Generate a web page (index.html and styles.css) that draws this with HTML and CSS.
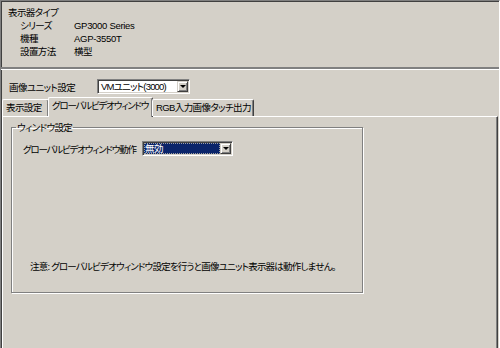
FILE: index.html
```html
<!DOCTYPE html>
<html lang="ja">
<head>
    <meta charset="UTF-8">
    <title>表示器タイプ</title>
    <link rel="stylesheet" href="styles.css">
</head>
<body>
    <div class="window">
        <div class="info">
            <div class="info-title">表示器タイプ</div>
            <div class="spec"><span class="spec-label">シリーズ</span><span class="latin">GP3000 Series</span></div>
            <div class="spec"><span class="spec-label">機種</span><span class="latin">AGP-3550T</span></div>
            <div class="spec"><span class="spec-label">設置方法</span><span>横型</span></div>
        </div>

        <div class="separator"></div>

        <div class="unit-row">
            <span class="unit-label">画像ユニット設定</span>
            <div class="combo unit-combo">
                <span class="combo-value">VMユニット(3000)</span>
                <span class="combo-button"><span class="arrow"></span></span>
            </div>
        </div>

        <div class="tabs">
            <div class="tab">表示設定</div>
            <div class="tab selected">グローバルビデオウィンドウ</div>
            <div class="tab">RGB入力画像タッチ出力</div>
        </div>

        <div class="panel">
            <fieldset class="group">
                <legend>ウィンドウ設定</legend>
                <div class="field-row">
                    <span class="field-label">グローバルビデオウィンドウ動作</span>
                    <div class="combo action-combo">
                        <span class="combo-value focused"><span class="focus-ring">無効</span></span>
                        <span class="combo-button"><span class="arrow"></span></span>
                    </div>
                </div>
                <p class="note">注意: グローバルビデオウィンドウ設定を行うと画像ユニット表示器は動作しません。</p>
            </fieldset>
        </div>
    </div>
</body>
</html>
```

FILE: styles.css
```css
body {
    margin: 0;
    background: #d4d0c8;
    font-family: "Liberation Sans", "Noto Sans CJK JP", sans-serif;
    font-size: 9.5px;
    letter-spacing: -0.6px;
    font-feature-settings: "palt";
    color: #000;
}
.latin {
    letter-spacing: -0.3px;
}
.window {
    width: 500px;
    height: 348px;
    box-sizing: border-box;
    overflow: hidden;
    border-top: 1px solid #808080;
    border-left: 1px solid #808080;
    border-right: 1px solid #ffffff;
    box-shadow: inset 1px 1px 0 #404040;
}
.info {
    padding: 5px 0 0 7px;
    line-height: 13px;
}
.spec {
    display: flex;
    padding-left: 12px;
}
.spec-label {
    width: 54px;
}
.separator {
    margin-top: 9px;
    height: 2px;
    background: #808080;
    border-bottom: 1px solid #ffffff;
}
.unit-row {
    display: flex;
    align-items: center;
    margin-top: 9px;
    padding-left: 8px;
}
.unit-label {
    width: 88px;
    white-space: nowrap;
}
.combo {
    display: flex;
    height: 15px;
    box-sizing: border-box;
    background: #ffffff;
    border-top: 1px solid #808080;
    border-left: 1px solid #808080;
    border-right: 1px solid #ffffff;
    border-bottom: 1px solid #ffffff;
    box-shadow: inset 1px 1px 0 #404040, inset -1px -1px 0 #d4d0c8;
    padding: 1px;
}
.unit-combo {
    width: 93px;
    letter-spacing: -0.8px;
}
.action-combo {
    width: 91px;
}
.combo-value {
    flex: 1;
    line-height: 11px;
    padding-left: 2px;
    white-space: nowrap;
    overflow: hidden;
}
.combo-value.focused {
    background: #0a246a;
    color: #ffffff;
    padding: 0;
}
.focus-ring {
    display: block;
    height: 11px;
    box-sizing: border-box;
    outline: 1px dotted #a0a0a0;
    outline-offset: -1px;
    padding-left: 1px;
}
.combo-button {
    width: 11px;
    box-sizing: border-box;
    background: #d4d0c8;
    border-top: 1px solid #d4d0c8;
    border-left: 1px solid #d4d0c8;
    border-right: 1px solid #404040;
    border-bottom: 1px solid #404040;
    box-shadow: inset 1px 1px 0 #ffffff, inset -1px -1px 0 #808080;
    display: flex;
    align-items: center;
    justify-content: center;
}
.arrow {
    width: 0;
    height: 0;
    border-left: 3px solid transparent;
    border-right: 3px solid transparent;
    border-top: 3px solid #000;
}
.tabs {
    display: flex;
    align-items: flex-end;
    height: 19px;
    margin-top: 3px;
    padding-left: 1px;
    position: relative;
    z-index: 1;
}
.tab {
    height: 17px;
    box-sizing: border-box;
    padding: 0 3px;
    line-height: 15px;
    border-top: 1px solid #ffffff;
    border-left: 1px solid #ffffff;
    border-right: 1px solid #404040;
    box-shadow: inset -1px 0 0 #808080;
    border-radius: 2px 2px 0 0;
    white-space: nowrap;
    overflow: hidden;
}
.tab:first-child {
    width: 47px;
}
.tab.selected {
    height: 20px;
    margin: 0 -1px -1px -1px;
    width: 105px;
    padding-left: 3px;
    background: #d4d0c8;
    line-height: 16px;
    letter-spacing: -1.2px;
}
.tab:last-child {
    width: 102px;
}
.panel {
    height: 240px;
    margin-left: 1px;
    margin-right: 1px;
    border-top: 1px solid #ffffff;
    border-left: 1px solid #ffffff;
    border-right: 1px solid #404040;
    box-shadow: inset -1px 0 0 #808080;
    padding-top: 4px;
}
.group {
    margin: 0 0 0 8px;
    padding: 0;
    width: 352px;
    height: 172px;
    box-sizing: border-box;
    border: 1px solid #808080;
    box-shadow: 1px 1px 0 #ffffff, inset 1px 1px 0 #ffffff;
}
.group legend {
    margin-left: 4px;
    padding: 0 1px;
    line-height: 13px;
}
.field-row {
    display: flex;
    align-items: center;
    margin-top: 7px;
    padding-left: 11px;
}
.field-label {
    width: 119px;
    flex-shrink: 0;
    white-space: nowrap;
    letter-spacing: -1.2px;
}
.note {
    margin: 104px 0 0 0;
    padding-left: 18px;
    line-height: 13px;
    white-space: nowrap;
    letter-spacing: -0.8px;
}
```
